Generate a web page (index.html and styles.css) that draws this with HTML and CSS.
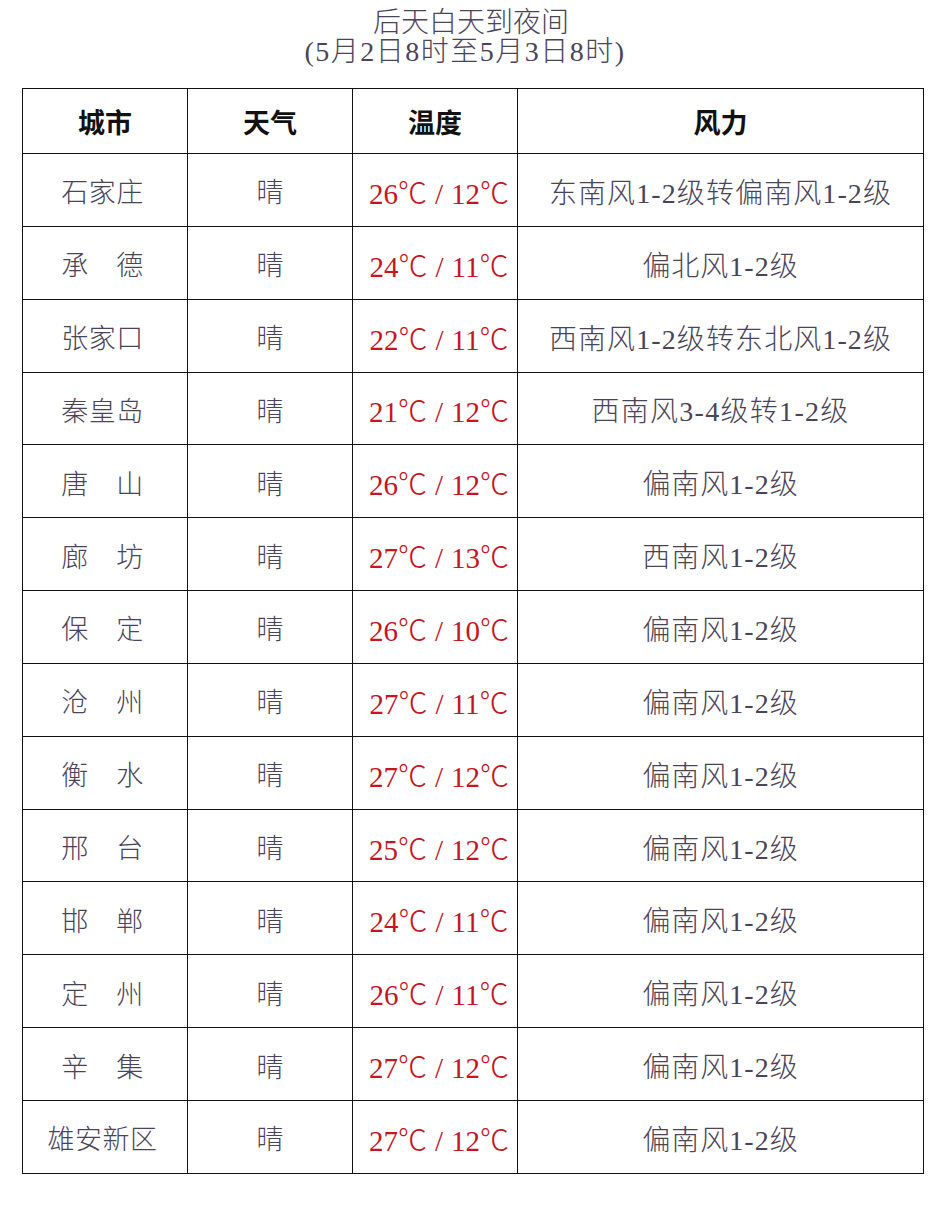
FILE: index.html
```html
<!DOCTYPE html>
<html lang="zh-CN">
<head>
<meta charset="utf-8">
<title>后天白天到夜间</title>
<link rel="stylesheet" href="styles.css">
</head>
<body>
<div class="page">
  <div class="title">
    <div class="title-line">后天白天到夜间</div>
    <div class="title-line sub">(5月2日8时至5月3日8时)</div>
  </div>
  <table class="forecast">
    <colgroup>
      <col class="c-city"><col class="c-wx"><col class="c-temp"><col class="c-wind">
    </colgroup>
    <thead>
      <tr><th>城市</th><th>天气</th><th>温度</th><th>风力</th></tr>
    </thead>
    <tbody>
      <tr><td class="city">石家庄</td><td>晴</td><td class="temp">26<span class="deg">℃</span><span class="sl">/</span>12<span class="deg">℃</span></td><td class="wind long">东南风1-2级转偏南风1-2级</td></tr>
      <tr><td class="city">承　德</td><td>晴</td><td class="temp">24<span class="deg">℃</span><span class="sl">/</span>11<span class="deg">℃</span></td><td class="wind">偏北风1-2级</td></tr>
      <tr><td class="city">张家口</td><td>晴</td><td class="temp">22<span class="deg">℃</span><span class="sl">/</span>11<span class="deg">℃</span></td><td class="wind long">西南风1-2级转东北风1-2级</td></tr>
      <tr><td class="city">秦皇岛</td><td>晴</td><td class="temp">21<span class="deg">℃</span><span class="sl">/</span>12<span class="deg">℃</span></td><td class="wind mid">西南风3-4级转1-2级</td></tr>
      <tr><td class="city">唐　山</td><td>晴</td><td class="temp">26<span class="deg">℃</span><span class="sl">/</span>12<span class="deg">℃</span></td><td class="wind">偏南风1-2级</td></tr>
      <tr><td class="city">廊　坊</td><td>晴</td><td class="temp">27<span class="deg">℃</span><span class="sl">/</span>13<span class="deg">℃</span></td><td class="wind">西南风1-2级</td></tr>
      <tr><td class="city">保　定</td><td>晴</td><td class="temp">26<span class="deg">℃</span><span class="sl">/</span>10<span class="deg">℃</span></td><td class="wind">偏南风1-2级</td></tr>
      <tr><td class="city">沧　州</td><td>晴</td><td class="temp">27<span class="deg">℃</span><span class="sl">/</span>11<span class="deg">℃</span></td><td class="wind">偏南风1-2级</td></tr>
      <tr><td class="city">衡　水</td><td>晴</td><td class="temp">27<span class="deg">℃</span><span class="sl">/</span>12<span class="deg">℃</span></td><td class="wind">偏南风1-2级</td></tr>
      <tr><td class="city">邢　台</td><td>晴</td><td class="temp">25<span class="deg">℃</span><span class="sl">/</span>12<span class="deg">℃</span></td><td class="wind">偏南风1-2级</td></tr>
      <tr><td class="city">邯　郸</td><td>晴</td><td class="temp">24<span class="deg">℃</span><span class="sl">/</span>11<span class="deg">℃</span></td><td class="wind">偏南风1-2级</td></tr>
      <tr><td class="city">定　州</td><td>晴</td><td class="temp">26<span class="deg">℃</span><span class="sl">/</span>11<span class="deg">℃</span></td><td class="wind">偏南风1-2级</td></tr>
      <tr><td class="city">辛　集</td><td>晴</td><td class="temp">27<span class="deg">℃</span><span class="sl">/</span>12<span class="deg">℃</span></td><td class="wind">偏南风1-2级</td></tr>
      <tr><td class="city">雄安新区</td><td>晴</td><td class="temp">27<span class="deg">℃</span><span class="sl">/</span>12<span class="deg">℃</span></td><td class="wind">偏南风1-2级</td></tr>
    </tbody>
  </table>
</div>
</body>
</html>
```

FILE: styles.css
```css
html, body {
  margin: 0;
  padding: 0;
  background: #ffffff;
}

body {
  font-family: "Liberation Serif", "Noto Sans CJK SC", serif;
  color: #4a4458;
}

.page {
  width: 942px;
  padding-top: 8px;
}

.title {
  text-align: center;
  font-size: 28px;
  line-height: 29px;
  color: #4a4458;
  font-weight: 300;
}

.title .sub {
  letter-spacing: 1.5px;
  padding-right: 12px;
}

.forecast {
  margin-top: 22px;
  margin-left: 22px;
  width: 901px;
  border-collapse: collapse;
  table-layout: fixed;
}

.c-city, .c-wx, .c-temp { width: 165px; }
.c-wind { width: 406px; }

.forecast th,
.forecast td {
  border: 1px solid #111111;
  text-align: center;
  vertical-align: middle;
  padding: 0;
  font-size: 27px;
  white-space: nowrap;
}

.forecast th {
  height: 64px;
  color: #111111;
  font-weight: bold;
}

.forecast td {
  height: 69.85px;
  padding-top: 2px;
  font-weight: 300;
}

.forecast td.city {
  padding-right: 5px;
  letter-spacing: 0.5px;
}

.forecast td.temp {
  color: #c4161e;
  font-size: 29px;
  padding-left: 8px;
}

.temp .deg {
  font-family: "Noto Sans CJK SC", sans-serif;
  font-weight: 300;
}

.temp .sl {
  padding: 0 8px;
}

.forecast td.wind {
  font-size: 28px;
  letter-spacing: 1px;
}

.forecast td.wind.mid {
  letter-spacing: 1.3px;
}

.forecast td.wind.long {
  letter-spacing: 1.1px;
}
```
